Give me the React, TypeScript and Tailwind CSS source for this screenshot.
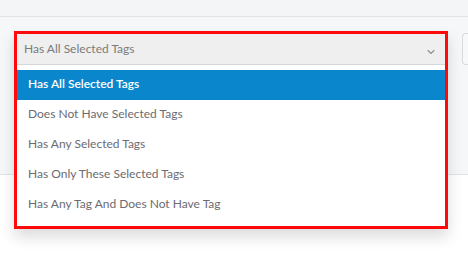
import { ChevronDown } from 'lucide-react';

const options = [
  'Has All Selected Tags',
  'Does Not Have Selected Tags',
  'Has Any Selected Tags',
  'Has Only These Selected Tags',
  'Has Any Tag And Does Not Have Tag',
];

export default function App() {
  const selected = 0;

  return (
    <div className="relative h-[261px] w-[468px] overflow-hidden bg-white font-['Lato','Open_Sans',sans-serif]">
      {/* top strip */}
      <div className="h-[17px] border-b border-[#e2e3e5] bg-[#f4f5f7]" />

      {/* filter band */}
      <div className="h-[158px] border-b border-[#e2e3e5] bg-[#f6f7f9]">
        <div className="flex pt-[16px] pl-[462px]">
          <div className="h-[32px] w-[20px] rounded-l-[4px] border border-r-0 border-[#d9dadd] bg-[#f7f8fa]" />
        </div>
      </div>

      {/* open dropdown, highlighted */}
      <div className="absolute left-[14px] top-[31px] w-[434px] border-[3px] border-[#ff0a0a] bg-white shadow-[0_8px_14px_rgba(0,0,0,0.14)]">
        <div className="flex h-[31px] items-center justify-between border-b border-[#d6d6d6] bg-[#efefef] pl-[7px] pr-[8px]">
          <span className="text-[12px] text-[#7b7b7b]">Has All Selected Tags</span>
          <ChevronDown size={12} strokeWidth={2.2} className="mt-[6px] text-[#8c929a]" />
        </div>
        <ul className="pt-[5px] pb-[6px]">
          {options.map((opt, i) => (
            <li
              key={opt}
              className={
                i === selected
                  ? 'flex h-[30px] items-center bg-[#0a87cc] pb-[2px] pl-[11px] text-[12px] font-semibold text-white'
                  : 'flex h-[30px] items-center pb-[2px] pl-[11px] text-[12px] text-[#6b6b70]'
              }
            >
              {opt}
            </li>
          ))}
        </ul>
      </div>
    </div>
  );
}
